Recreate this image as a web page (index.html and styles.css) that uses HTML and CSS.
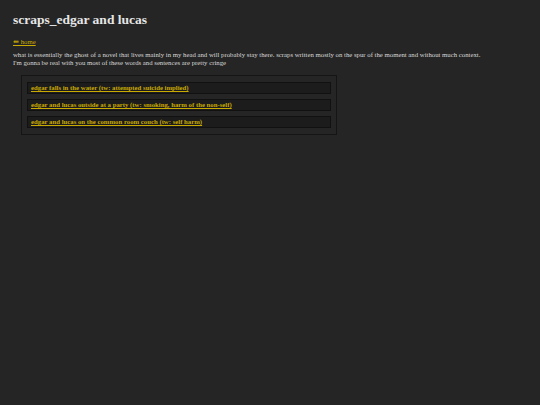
FILE: index.html
```html
<!DOCTYPE html>
<html>
<head>
<meta charset="utf-8">
<link rel="stylesheet" href="styles.css">
</head>
<body>
<h1 class="title">scraps_edgar and lucas</h1>
<p class="nav"><a href="#">&#8666; home</a></p>
<p class="desc">what is essentially the ghost of a novel that lives mainly in my head and will probably stay there. scraps written mostly on the spur of the moment and without much context.<br>I'm gonna be real with you most of these words and sentences are pretty cringe</p>
<div class="box">
  <div class="item"><a href="#">edgar falls in the water (tw: attempted suicide implied)</a></div>
  <div class="item"><a href="#">edgar and lucas outside at a party (tw: smoking, harm of the non-self)</a></div>
  <div class="item"><a href="#">edgar and lucas on the common room couch (tw: self harm)</a></div>
</div>
</body>
</html>
```
FILE: styles.css
```css
html, body {
  margin: 0;
  background: #252525;
}
body {
  padding: 12px 13px;
  font-family: "Liberation Serif", serif;
  font-size: 6.75px;
  color: #d8d8d8;
}
.title {
  font-size: 13.5px;
  font-weight: bold;
  color: #e6e6e6;
  margin: 0 0 10px 0;
}
a {
  color: #c9aa00;
}
.nav {
  margin: 0 0 5px 0;
}
.desc {
  margin: 0 0 8px 0;
  line-height: 8px;
}
.box {
  margin-left: 8px;
  width: 304px;
  border: 1px solid #151515;
  padding: 6px 5px;
  display: flex;
  flex-direction: column;
  gap: 5px;
}
.item {
  background: #1c1c1c;
  border: 1px solid #111;
  padding: 1px 3px;
  height: 8px;
  font-weight: bold;
  line-height: 8px;
}
```
